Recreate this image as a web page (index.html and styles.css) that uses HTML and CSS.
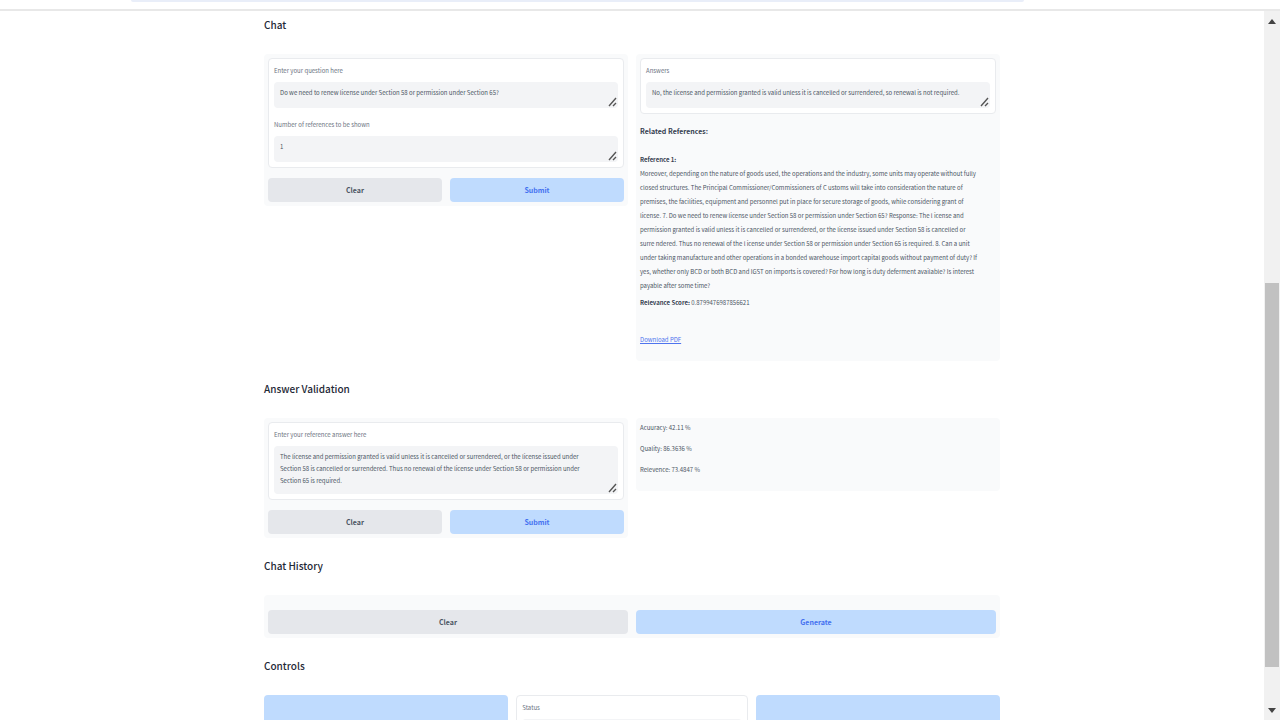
FILE: index.html
```html
<!DOCTYPE html>
<html lang="en">
<head>
    <meta charset="UTF-8">
    <meta name="viewport" content="width=device-width, initial-scale=1.0">
    <title>Chat</title>
    <link rel="stylesheet" href="styles.css">
</head>
<body>

    <header class="browser-bar">
        <div class="address"></div>
    </header>

    <div class="viewport">
        <main class="main-content">
            <div class="container">

                <section>
                    <h2>Chat</h2>
                    <div class="columns">
                        <div class="panel">
                            <div class="card">
                                <label for="question">Enter your question here</label>
                                <div class="field">
                                    <textarea id="question" rows="1">Do we need to renew license under Section 58 or permission under Section 65?</textarea>
                                    <svg class="grip" viewBox="0 0 9 10"><path d="M1 9L8 1M5 9L8 6"/></svg>
                                </div>
                                <label for="refcount">Number of references to be shown</label>
                                <div class="field">
                                    <textarea id="refcount" rows="1">1</textarea>
                                    <svg class="grip" viewBox="0 0 9 10"><path d="M1 9L8 1M5 9L8 6"/></svg>
                                </div>
                            </div>
                            <div class="buttons">
                                <button class="btn" type="button">Clear</button>
                                <button class="btn primary" type="button">Submit</button>
                            </div>
                        </div>

                        <div class="panel answer">
                            <div class="card">
                                <label for="answers">Answers</label>
                                <div class="field">
                                    <textarea id="answers" rows="1">No, the license and permission granted is valid unless it is cancelled or surrendered, so renewal is not required.</textarea>
                                    <svg class="grip" viewBox="0 0 9 10"><path d="M1 9L8 1M5 9L8 6"/></svg>
                                </div>
                            </div>
                            <h3>Related References:</h3>
                            <h4>Reference 1:</h4>
                            <p class="reference">Moreover, depending on the nature of goods used, the operations and the industry, some units may operate without fully<br>
                            closed structures. The Principal Commissioner/Commissioners of C ustoms will take into consideration the nature of<br>
                            premises, the facilities, equipment and personnel put in place for secure storage of goods, while considering grant of<br>
                            license. 7. Do we need to renew license under Section 58 or permission under Section 65? Response: The l icense and<br>
                            permission granted is valid unless it is cancelled or surrendered, or the license issued under Section 58 is cancelled or<br>
                            surre ndered. Thus no renewal of the l icense under Section 58 or permission under Section 65 is required. 8. Can a unit<br>
                            under taking manufacture and other operations in a bonded warehouse import capital goods without payment of duty? If<br>
                            yes, whether only BCD or both BCD and IGST on imports is covered? For how long is duty deferment available? Is interest<br>
                            payable after some time?</p>
                            <p class="score"><strong>Relevance Score:</strong> 0.8799476987856621</p>
                            <p class="download"><a href="#">Download PDF</a></p>
                        </div>
                    </div>
                </section>

                <section>
                    <h2>Answer Validation</h2>
                    <div class="columns">
                        <div class="panel">
                            <div class="card">
                                <label for="refanswer">Enter your reference answer here</label>
                                <div class="field">
                                    <textarea id="refanswer" class="tall" rows="3">The license and permission granted is valid unless it is cancelled or surrendered, or the license issued under
Section 58 is cancelled or surrendered. Thus no renewal of the license under Section 58 or permission under
Section 65 is required.</textarea>
                                    <svg class="grip" viewBox="0 0 9 10"><path d="M1 9L8 1M5 9L8 6"/></svg>
                                </div>
                            </div>
                            <div class="buttons">
                                <button class="btn" type="button">Clear</button>
                                <button class="btn primary" type="button">Submit</button>
                            </div>
                        </div>

                        <div class="panel scores">
                            <p>Acuuracy: 42.11 %</p>
                            <p>Quality: 86.3636 %</p>
                            <p>Relevence: 73.4847 %</p>
                        </div>
                    </div>
                </section>

                <section>
                    <h2>Chat History</h2>
                    <div class="panel history">
                        <div class="buttons">
                            <button class="btn" type="button">Clear</button>
                            <button class="btn primary" type="button">Generate</button>
                        </div>
                    </div>
                </section>

                <section>
                    <h2>Controls</h2>
                    <div class="controls">
                        <button class="btn primary" type="button">Load documents and build index</button>
                        <div class="card">
                            <label for="status">Status</label>
                            <div class="field">
                                <textarea id="status" rows="1"></textarea>
                            </div>
                        </div>
                        <button class="btn primary" type="button">Shutdown</button>
                    </div>
                </section>

            </div>
        </main>

        <div class="scrollbar">
            <svg class="arrow" viewBox="0 0 8 5"><path d="M4 0L8 5H0Z"/></svg>
            <div class="track">
                <div class="thumb"></div>
            </div>
            <svg class="arrow" viewBox="0 0 8 5"><path d="M0 0H8L4 5Z"/></svg>
        </div>
    </div>

</body>
</html>
```
FILE: styles.css
```css
* {
    margin: 0;
    padding: 0;
    box-sizing: border-box;
}

body {
    height: 100vh;
    display: flex;
    flex-direction: column;
    overflow: hidden;
    background: #fff;
    color: #4b5563;
    font-family: "Noto Sans CJK SC", "Open Sans", sans-serif;
    font-size: 6px;
    line-height: 14px;
}

/* Bottom edge of the browser toolbar */
.browser-bar {
    flex: none;
    height: 11px;
    padding: 0 20% 0 131px;
    border-bottom: 2px solid #e8e8e8;
}

.address {
    height: 2px;
    background: #e9eef9;
    border-radius: 0 0 4px 4px;
}

.viewport {
    flex: 1;
    min-height: 0;
    display: flex;
}

.main-content {
    flex: 1;
    overflow: hidden;
    padding-top: 4px;
}

.container {
    max-width: 736px;
    margin: 0 auto;
}

section {
    margin-bottom: 18px;
}

h2 {
    margin-bottom: 19px;
    color: #1f2937;
    font-size: 10px;
    font-weight: 500;
    line-height: 20px;
}

.columns {
    display: grid;
    grid-template-columns: minmax(0, 1fr) minmax(0, 1fr);
    gap: 8px;
    align-items: start;
}

.panel {
    padding: 4px;
    background: #f9fafb;
    border-radius: 4px;
}

.card {
    padding: 5px;
    background: #fff;
    border: 1px solid #e9ebee;
    border-radius: 4px;
}

label {
    display: block;
    margin-bottom: 4px;
    color: #6b7280;
}

.field {
    position: relative;
}

.field + label {
    margin-top: 10px;
}

textarea {
    display: block;
    width: 100%;
    height: 26px;
    padding: 5px 6px;
    background: #f3f4f6;
    border: none;
    border-radius: 4px;
    color: #4b5563;
    font: inherit;
    line-height: 12px;
    resize: none;
    overflow: hidden;
}

textarea.tall {
    height: 48px;
}

.grip {
    position: absolute;
    right: 1px;
    bottom: 1px;
    width: 9px;
    height: 10px;
    fill: none;
    stroke: #555;
    stroke-width: 1.4;
}

.buttons {
    display: grid;
    grid-template-columns: 1fr 1fr;
    gap: 8px;
    margin-top: 10px;
}

.btn {
    height: 24px;
    background: #e5e7eb;
    border: none;
    border-radius: 4px;
    color: #4b5563;
    font: inherit;
    font-size: 7px;
    font-weight: 700;
    cursor: pointer;
}

.btn.primary {
    background: #bfdbfe;
    color: #4471f0;
}

h3 {
    margin-top: 10px;
    color: #374151;
    font-size: 7px;
    font-weight: 700;
}

h4 {
    margin-top: 15px;
    color: #374151;
    font-size: 6px;
    font-weight: 700;
}

.score {
    margin-top: 3px;
}

.score strong {
    color: #374151;
}

.download {
    margin: 23px 0 10px;
}

.download a {
    color: #4f74ee;
}

.scores {
    padding: 3px 4px 14px;
}

.scores p {
    margin-bottom: 7px;
}

.scores p:last-child {
    margin-bottom: 0;
}

.history {
    padding-top: 5px;
}

.controls {
    display: grid;
    grid-template-columns: 244fr 231fr 244fr;
    gap: 8px;
}

.controls .btn {
    height: auto;
}

/* Scrollbar */
.scrollbar {
    flex: none;
    width: 16px;
    display: flex;
    flex-direction: column;
    align-items: center;
    padding: 8px 0 7px;
    background: #f1f1f1;
}

.arrow {
    width: 8px;
    height: 5px;
    fill: #444;
}

.track {
    flex: 1;
    width: 14px;
    margin: 8px 0;
    display: grid;
    grid-template-rows: 251fr 384fr 33fr;
}

.thumb {
    grid-row: 2;
    background: #c1c1c1;
}
```
